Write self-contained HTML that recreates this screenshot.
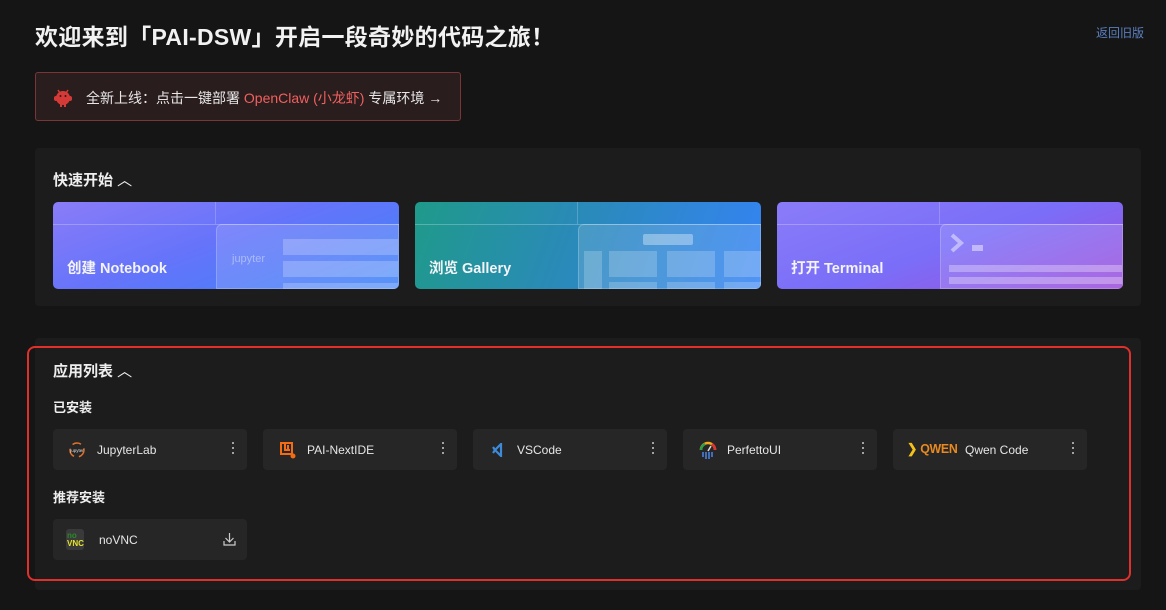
<!DOCTYPE html>
<html><head><meta charset="utf-8"><style>
*{box-sizing:border-box;margin:0;padding:0}
body{width:1166px;height:610px;background:#151515;font-family:"Liberation Sans","Noto Sans CJK SC",sans-serif;color:#e8e8e8;position:relative;overflow:hidden}
.abs{position:absolute}
h1{position:absolute;left:35px;top:18px;font-size:23px;font-weight:bold;color:#f2f2f2;letter-spacing:0.3px}
.old{position:absolute;right:22px;top:24px;font-size:12px;color:#5b7fbf}
.banner{left:35px;top:72px;width:426px;height:49px;border:1px solid #7a3636;background:#2a1d1e;border-radius:3px;font-size:14px;color:#e6e6e6;padding:15px 0 0 50px}
.banner b{color:#f0605e;font-weight:normal}
.panel{background:#1c1c1c;border-radius:4px;left:35px;width:1106px}
.ttl{font-size:15px;font-weight:bold;color:#eee}
.card{position:absolute;top:202px;width:346px;height:87px;border-radius:5px;overflow:hidden}
.card .lbl{position:absolute;left:14px;top:55px;font-size:14.5px;font-weight:bold;color:#f4f4f8}
.card .hl{position:absolute;left:0;right:0;top:22px;height:1px;background:rgba(255,255,255,.25)}
.card .vl{position:absolute;left:162px;top:0;width:1px;height:22px;background:rgba(255,255,255,.2)}
.card .win{position:absolute;left:163px;top:22px;right:0;bottom:0;border-top-left-radius:6px;background:rgba(255,255,255,.14);border:1px solid rgba(255,255,255,.2)}
.item{position:absolute;width:194px;height:41px;background:#262626;border-radius:4px;font-size:12px;color:#e6e6e6}
.item .n{position:absolute;left:44px;top:14px}
.item .dots{position:absolute;right:12px;top:13px;width:3px}
.dots i{display:block;width:2px;height:2px;background:#ccc;margin-bottom:3px;border-radius:1px}
.sub{font-size:13px;font-weight:bold;color:#eee}
</style></head><body>
<h1>欢迎来到「PAI-DSW」开启一段奇妙的代码之旅！</h1>
<div class="old">返回旧版</div>
<div class="abs banner">全新上线：点击一键部署 <b>OpenClaw (小龙虾)</b> 专属环境 →
<svg class="abs" style="left:16px;top:13px" width="22" height="22" viewBox="0 0 22 22"><circle cx="11" cy="12" r="7" fill="#d63a36"/><rect x="2" y="10" width="4" height="5" rx="2" fill="#d63a36"/><rect x="16" y="10" width="4" height="5" rx="2" fill="#d63a36"/><path d="M6 4l2 3M16 4l-2 3" stroke="#d63a36" stroke-width="1.5"/><circle cx="8.5" cy="10" r="1" fill="#2a1d1e"/><circle cx="13.5" cy="10" r="1" fill="#2a1d1e"/><rect x="8" y="18" width="2" height="3" fill="#d63a36"/><rect x="12" y="18" width="2" height="3" fill="#d63a36"/></svg></div>

<div class="abs panel" style="top:148px;height:158px"></div>
<div class="abs ttl" style="left:53px;top:169px">快速开始 <span style="font-weight:normal">︿</span></div>

<div class="card" style="left:53px;background:linear-gradient(160deg,#8a7cf8 0%,#6674fa 45%,#3c82f7 100%)">
 <div class="hl"></div><div class="vl"></div>
 <div class="win"><div class="abs" style="left:66px;top:14px;right:0;height:16px;background:rgba(255,255,255,.22)"></div><div class="abs" style="left:66px;top:36px;right:0;height:16px;background:rgba(255,255,255,.22)"></div><div class="abs" style="left:66px;top:58px;right:0;height:10px;background:rgba(255,255,255,.22)"></div><div class="abs" style="left:15px;top:28px;font-size:11px;color:rgba(255,255,255,.4)">jupyter</div></div>
 <div class="lbl">创建 Notebook</div></div>

<div class="card" style="left:415px;background:linear-gradient(110deg,#1f9a8a 0%,#2a8ab8 45%,#3583f5 100%)">
 <div class="hl"></div><div class="vl"></div>
 <div class="win"><div class="abs" style="left:64px;top:9px;width:50px;height:11px;background:rgba(255,255,255,.35);border-radius:2px"></div>
 <div class="abs" style="left:5px;top:26px;width:18px;height:40px;background:rgba(255,255,255,.2)"></div>
 <div class="abs" style="left:30px;top:26px;width:48px;height:26px;background:rgba(255,255,255,.2)"></div><div class="abs" style="left:88px;top:26px;width:48px;height:26px;background:rgba(255,255,255,.2)"></div><div class="abs" style="left:145px;top:26px;width:48px;height:26px;background:rgba(255,255,255,.2)"></div>
 <div class="abs" style="left:30px;top:57px;width:48px;height:10px;background:rgba(255,255,255,.2)"></div><div class="abs" style="left:88px;top:57px;width:48px;height:10px;background:rgba(255,255,255,.2)"></div><div class="abs" style="left:145px;top:57px;width:48px;height:10px;background:rgba(255,255,255,.2)"></div></div>
 <div class="lbl">浏览 Gallery</div></div>

<div class="card" style="left:777px;background:linear-gradient(160deg,#8a7cf8 0%,#7a6ef8 50%,#9d4ddc 100%)">
 <div class="hl"></div><div class="vl"></div>
 <div class="win"><svg class="abs" style="left:8px;top:8px" width="40" height="24"><path d="M3 2l9 8-9 8" stroke="rgba(255,255,255,.45)" stroke-width="4" fill="none"/><rect x="23" y="12" width="11" height="6" fill="rgba(255,255,255,.45)"/></svg><div class="abs" style="left:8px;top:40px;right:0;height:7px;background:rgba(255,255,255,.3)"></div><div class="abs" style="left:8px;top:52px;right:0;height:7px;background:rgba(255,255,255,.3)"></div></div>
 <div class="lbl">打开 Terminal</div></div>

<div class="abs panel" style="top:338px;height:252px"></div>
<div class="abs" style="left:27px;top:346px;width:1104px;height:235px;border:2px solid #e0302c;border-radius:8px"></div>
<div class="abs ttl" style="left:53px;top:360px">应用列表 <span style="font-weight:normal">︿</span></div>
<div class="abs sub" style="left:53px;top:397px">已安装</div>

<div class="item" style="left:53px;top:429px"><svg class="abs" style="left:16px;top:13px" width="16" height="16"><circle cx="8" cy="8" r="7" fill="none" stroke="#e0702a" stroke-width="1.5" stroke-dasharray="9 5"/><text x="8" y="10" font-size="4.5" fill="#ddd" text-anchor="middle" font-family="Liberation Sans">jupyter</text></svg><span class="n">JupyterLab</span><div class="dots"><i></i><i></i><i></i></div></div>
<div class="item" style="left:263px;top:429px"><svg class="abs" style="left:15px;top:11px" width="18" height="19"><path d="M3 3h11v11H3z M7 4v6h5 M10 5v6" stroke="#f36b12" stroke-width="2" fill="none"/><circle cx="15" cy="16" r="2.5" fill="#f36b12"/></svg><span class="n">PAI-NextIDE</span><div class="dots"><i></i><i></i><i></i></div></div>
<div class="item" style="left:473px;top:429px"><svg class="abs" style="left:18px;top:14px" width="14" height="14"><path d="M10 1L4 7l6 6V1z M2 4l2 3-2 3" stroke="#3c8ad8" stroke-width="2.2" fill="none"/></svg><span class="n">VSCode</span><div class="dots"><i></i><i></i><i></i></div></div>
<div class="item" style="left:683px;top:429px"><svg class="abs" style="left:15px;top:11px" width="20" height="20"><path d="M3 10a7 7 0 0 1 14 0" stroke="#f2a81a" stroke-width="2.5" fill="none"/><path d="M3 10a7 7 0 0 1 4-6" stroke="#2aa04a" stroke-width="2.5" fill="none"/><path d="M14 4a7 7 0 0 1 3 6" stroke="#d33" stroke-width="2.5" fill="none"/><path d="M10 11l3-5" stroke="#ddd" stroke-width="1.5"/><path d="M5 12v5M8 12v7M11 12v7M14 12v5" stroke="#4a86e8" stroke-width="1.5"/></svg><span class="n">PerfettoUI</span><div class="dots"><i></i><i></i><i></i></div></div>
<div class="item" style="left:893px;top:429px"><span class="abs" style="left:14px;top:12px;font-size:13px;font-weight:bold;color:#e88a20;letter-spacing:-0.3px;transform:scaleX(0.95);transform-origin:left"><span style="color:#f3c21a">❯</span> QWEN</span><span class="n" style="left:72px">Qwen Code</span><div class="dots"><i></i><i></i><i></i></div></div>

<div class="abs sub" style="left:53px;top:487px">推荐安装</div>
<div class="item" style="left:53px;top:519px"><div class="abs" style="left:13px;top:10px;width:18px;height:21px;background:#3a3a3a;border-radius:3px;font-size:8px;font-weight:bold;line-height:8px;padding-top:3px;padding-left:1px"><span style="color:#2a8a2a">no</span><br><span style="color:#e5e52a">VNC</span></div><span class="n" style="left:46px">noVNC</span><svg class="abs" style="left:170px;top:13px" width="13" height="14"><path d="M6.5 1v9M2.5 6l4 4 4-4M1 9v4h11V9" stroke="#ccc" stroke-width="1.2" fill="none"/></svg></div>
</body></html>
